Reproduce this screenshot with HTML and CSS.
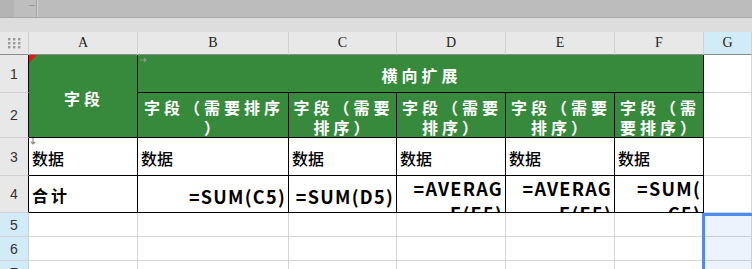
FILE: index.html
```html
<html lang="zh">
<head>
  <meta charset="UTF-8">
  <title>Sheet</title>
  <link rel="stylesheet" href="styles.css">
</head>
<body>
  <div class="topbar">
    <div class="tb-left"><span class="tb-dash"></span></div>
    <div class="tb-box"></div>
  </div>
  <div class="band"></div>

  <div class="sheet">
    <div class="cell corner">
      <svg width="13" height="11" viewBox="0 0 13 11">
        <g fill="#9a9a9a">
          <rect x="0" y="0" width="2.4" height="2.4"/><rect x="5" y="0" width="2.4" height="2.4"/><rect x="10" y="0" width="2.4" height="2.4"/>
          <rect x="0" y="4" width="2.4" height="2.4"/><rect x="5" y="4" width="2.4" height="2.4"/><rect x="10" y="4" width="2.4" height="2.4"/>
          <rect x="0" y="8" width="2.4" height="2.4"/><rect x="5" y="8" width="2.4" height="2.4"/><rect x="10" y="8" width="2.4" height="2.4"/>
        </g>
      </svg>
    </div>
    <div class="cell col-head">A</div>
    <div class="cell col-head">B</div>
    <div class="cell col-head">C</div>
    <div class="cell col-head">D</div>
    <div class="cell col-head">E</div>
    <div class="cell col-head">F</div>
    <div class="cell col-head sel">G</div>

    <!-- row 1 -->
    <div class="cell row-head edge">1</div>
    <div class="cell green field-a"><span class="comment-mark"></span>字段</div>
    <div class="cell green expand">
      <svg class="mark-right" width="8" height="6" viewBox="0 0 8 6"><path d="M0 3h6M4 1l2 2-2 2" stroke="#8a9a8a" stroke-width="1.2" fill="none"/></svg>
      横向扩展
    </div>
    <div class="cell"></div>

    <!-- row 2 -->
    <div class="cell row-head edge">2</div>
    <div class="cell green">字段（需要排序）</div>
    <div class="cell green">字段（需要排序）</div>
    <div class="cell green">字段（需要排序）</div>
    <div class="cell green">字段（需要排序）</div>
    <div class="cell green">字段（需要排序）</div>
    <div class="cell"></div>

    <!-- row 3 -->
    <div class="cell row-head edge">3</div>
    <div class="cell data txt">
      <svg class="mark-down" width="6" height="8" viewBox="0 0 6 8"><path d="M3 0v6M1 4l2 2 2-2" stroke="#8a8a8a" stroke-width="1.2" fill="none"/></svg>
      数据
    </div>
    <div class="cell data txt">数据</div>
    <div class="cell data txt">数据</div>
    <div class="cell data txt">数据</div>
    <div class="cell data txt">数据</div>
    <div class="cell data txt">数据</div>
    <div class="cell"></div>

    <!-- row 4 -->
    <div class="cell row-head edge">4</div>
    <div class="cell data txt total">合计</div>
    <div class="cell data formula">=SUM(C5)</div>
    <div class="cell data formula">=SUM(D5)</div>
    <div class="cell data formula wrap">=AVERAGE(<wbr>E5)</div>
    <div class="cell data formula wrap">=AVERAGE(<wbr>E5)</div>
    <div class="cell data formula wrap">=SUM(<wbr>C5)</div>
    <div class="cell"></div>

    <!-- rows 5-7 -->
    <div class="cell row-head sel">5</div>
    <div class="cell"></div><div class="cell"></div><div class="cell"></div>
    <div class="cell"></div><div class="cell"></div><div class="cell"></div>
    <div class="cell"></div>

    <div class="cell row-head sel">6</div>
    <div class="cell"></div><div class="cell"></div><div class="cell"></div>
    <div class="cell"></div><div class="cell"></div><div class="cell"></div>
    <div class="cell"></div>

    <div class="cell row-head sel">7</div>
    <div class="cell"></div><div class="cell"></div><div class="cell"></div>
    <div class="cell"></div><div class="cell"></div><div class="cell"></div>
    <div class="cell"></div>

    <div class="selection"></div>
  </div>
</body>
</html>
```

FILE: styles.css
```css
body {
  margin: 0;
  background: #fff;
  font-family: "Noto Sans CJK SC", "Noto Sans", sans-serif;
  overflow: hidden;
}

.topbar {
  display: flex;
  height: 18px;
  background: #b8b8b8;
  border-bottom: 1px solid #a8a8a8;
  box-sizing: border-box;
}

.tb-left {
  position: relative;
  width: 36px;
  background: linear-gradient(to right, #b4b4b4 14px, #bebebe 14px);
  border-right: 1px solid #a4a4a4;
}

.tb-dash {
  position: absolute;
  left: 29px;
  top: 5px;
  width: 6px;
  height: 1px;
  background: #999;
}

.tb-box {
  flex: 1;
  background: #bcbcbc;
  border-left: 1px solid #d0d0d0;
}

.band {
  height: 14px;
  background: #dddddd;
}

.sheet {
  position: relative;
  display: grid;
  grid-template-columns: 29px 109px 151px 108px 109px 109px 89px 1fr;
  grid-template-rows: 23px 38px 45px 38px 37px 24px 24px 24px;
}

.cell {
  display: flex;
  align-items: center;
  box-sizing: border-box;
  overflow: hidden;
  border-right: 1px solid #d6d6d6;
  border-bottom: 1px solid #d6d6d6;
}

.corner {
  justify-content: center;
  background: #e8e8e8;
  border-color: #d0d0d0;
  border-bottom-color: #8c8c8c;
}

.col-head {
  justify-content: center;
  background: #e8e8e8;
  border-color: #d2d2d2;
  border-bottom-color: #8c8c8c;
  font-family: "Liberation Serif", serif;
  font-size: 14px;
  color: #222;
}

.row-head {
  justify-content: center;
  background: #e8e8e8;
  border-color: #d2d2d2;
  font-family: "Liberation Sans", sans-serif;
  font-size: 14px;
  color: #333;
}

.row-head.edge {
  border-right-color: #000;
}

.col-head.sel,
.row-head.sel {
  background: #d2ebf8;
}

.green {
  position: relative;
  justify-content: center;
  text-align: center;
  padding: 3px 2px 0 4px;
  background: #37893b;
  border-color: #000;
  color: #fff;
  font-size: 16px;
  font-weight: bold;
  line-height: 20px;
  letter-spacing: 4px;
  line-break: anywhere;
}

.field-a {
  grid-row: span 2;
}

.expand {
  grid-column: span 5;
}

.comment-mark {
  position: absolute;
  top: 0;
  left: 0;
  border-top: 8px solid #e8161b;
  border-right: 8px solid transparent;
}

.mark-right {
  position: absolute;
  top: 2px;
  left: 2px;
}

.data {
  position: relative;
  border-color: #000;
  color: #000;
}

.mark-down {
  position: absolute;
  top: 0;
  left: 1px;
}

.txt {
  padding: 2px 0 0 3px;
  font-size: 16px;
  font-weight: 500;
}

.total {
  font-weight: bold;
  letter-spacing: 3px;
}

.formula {
  justify-content: flex-end;
  text-align: right;
  padding: 3px 2px 0 2px;
  font-size: 18px;
  font-weight: bold;
  letter-spacing: 1.3px;
  overflow-wrap: anywhere;
}

.formula.wrap {
  align-items: flex-start;
  padding-top: 0;
  padding-left: 9px;
  line-height: 25px;
}

.selection {
  position: absolute;
  left: 702px;
  top: 181px;
  width: 80px;
  height: 80px;
  border: 3px solid #4a8cf0;
  background: rgba(74, 140, 240, 0.1);
}
```
